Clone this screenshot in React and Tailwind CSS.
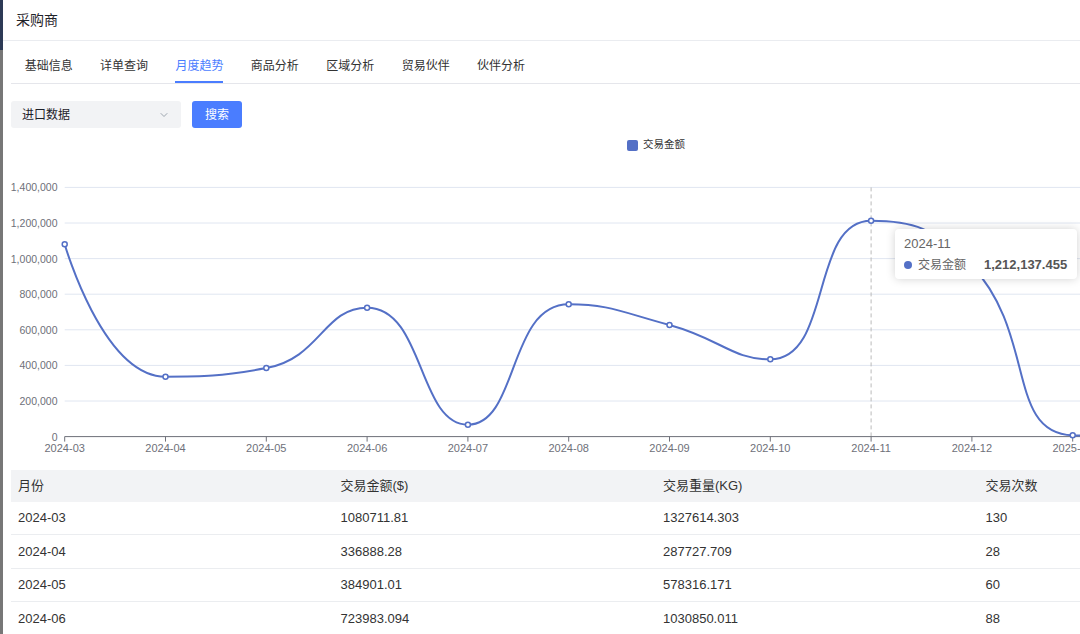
import React from "react";
import { ChevronDown } from "lucide-react";

const FONT = { fontFamily: '"Liberation Sans","Noto Sans CJK SC",sans-serif' };

const months = ["2024-03","2024-04","2024-05","2024-06","2024-07","2024-08","2024-09","2024-10","2024-11","2024-12","2025-01","2025-02"];
const values = [1080711.81, 336888.28, 384901.01, 723983.094, 66900, 743000, 627000, 434000, 1212137.455, 960000, 7000, 0];

const X0 = 53.7;
const DX = 100.8;
const Y0 = 281.6;
const PER = 35.6 / 200000;
const xAt = (i) => X0 + i * DX;
const yAt = (v) => Y0 - v * PER;

function smoothPath(pts, smooth = 0.5) {
  let d = `M${pts[0][0]},${pts[0][1]}`;
  let cp0x = pts[0][0], cp0y = pts[0][1];
  for (let k = 1; k < pts.length; k++) {
    const [x, y] = pts[k];
    const [px, py] = pts[k - 1];
    let ncx = x, ncy = y, c1x = x, c1y = y;
    if (k < pts.length - 1) {
      const [nx, ny] = pts[k + 1];
      let vx = nx - px, vy = ny - py;
      const lp = Math.hypot(x - px, y - py);
      const ln = Math.hypot(nx - x, ny - y);
      const r = ln / (ln + lp);
      c1x = x + vx * smooth * r;
      c1y = y + vy * smooth * r;
      c1x = Math.min(c1x, Math.max(nx, x));
      c1y = Math.min(c1y, Math.max(ny, y));
      c1x = Math.max(c1x, Math.min(nx, x));
      c1y = Math.max(c1y, Math.min(ny, y));
      vx = c1x - x; vy = c1y - y;
      ncx = x - vx * lp / ln;
      ncy = y - vy * lp / ln;
      ncx = Math.min(ncx, Math.max(px, x));
      ncy = Math.min(ncy, Math.max(py, y));
      ncx = Math.max(ncx, Math.min(px, x));
      ncy = Math.max(ncy, Math.min(py, y));
      vx = x - ncx; vy = y - ncy;
      c1x = x + vx * ln / lp;
      c1y = y + vy * ln / lp;
    }
    d += ` C${cp0x},${cp0y} ${ncx},${ncy} ${x},${y}`;
    cp0x = c1x; cp0y = c1y;
  }
  return d;
}

const pts = values.map((v, i) => [xAt(i), yAt(v)]);
const yLabels = ["0","200,000","400,000","600,000","800,000","1,000,000","1,200,000","1,400,000"];

const tabs = ["基础信息","详单查询","月度趋势","商品分析","区域分析","贸易伙伴","伙伴分析"];

const rows = [
  ["2024-03","1080711.81","1327614.303","130"],
  ["2024-04","336888.28","287727.709","28"],
  ["2024-05","384901.01","578316.171","60"],
  ["2024-06","723983.094","1030850.011","88"],
];

function Chart() {
  return (
    <div className="relative w-[1290px] h-[306px]">
      <svg width="1290" height="306" className="block overflow-visible">
        {yLabels.map((l, k) => (
          <g key={l}>
            {k > 0 && (
              <line x1={X0} x2={1161} y1={Y0 - k * 35.6} y2={Y0 - k * 35.6} stroke="#e0e6f1" strokeWidth="1" />
            )}
            <text x={46.5} y={Y0 - k * 35.6} textAnchor="end" dominantBaseline="central" fontSize="10.5" fill="#6e7079" style={FONT}>
              {l}
            </text>
          </g>
        ))}
        <line x1={xAt(8)} x2={xAt(8)} y1={Y0 - 7 * 35.6} y2={Y0} stroke="#bbbbbb" strokeWidth="1" strokeDasharray="4 3" />
        <line x1={X0} x2={1161} y1={Y0} y2={Y0} stroke="#6e7079" strokeWidth="1" />
        {months.map((m, i) => (
          <g key={m}>
            <line x1={xAt(i)} x2={xAt(i)} y1={Y0} y2={Y0 + 5} stroke="#6e7079" strokeWidth="1" />
            <text x={xAt(i)} y={293} textAnchor="middle" dominantBaseline="central" fontSize="11" fill="#6e7079" style={FONT}>
              {m}
            </text>
          </g>
        ))}
        <path d={smoothPath(pts)} fill="none" stroke="#5470c6" strokeWidth="2" />
        {pts.map(([x, y], i) => (
          i === 9 ? null :
          <circle key={i} cx={x} cy={y} r="2.5" fill="#ffffff" stroke="#5470c6" strokeWidth="1.5" />
        ))}
      </svg>
      <div className="absolute left-[884px] top-[74px] w-[182px] h-[50px] bg-white rounded-[4px] shadow-[0_0_10px_rgba(0,0,0,0.18)] pl-[9px] pt-[7px] flex flex-col gap-[5px]" style={FONT}>
        <div className="text-[13px] leading-[16px] text-[#666666]">2024-11</div>
        <div className="flex items-center leading-[16px]">
          <span className="w-[8px] h-[8px] rounded-full bg-[#5470c6] mr-[6px]" />
          <span className="text-[12px] text-[#666666]">交易金额</span>
          <span className="ml-[18px] text-[13px] font-bold text-[#555555]">1,212,137.455</span>
        </div>
      </div>
    </div>
  );
}

export default function App() {
  return (
    <div className="w-[1080px] h-[634px] overflow-hidden flex bg-white" style={FONT}>
      <div className="w-[3px] shrink-0 flex flex-col">
        <div className="h-[50px] bg-[#2d3a56]" />
        <div className="flex-1 bg-[#777777]" />
      </div>
      <div className="flex-1 min-w-0 overflow-hidden flex flex-col">
        <div className="h-[41px] shrink-0 border-b border-[#eaecf0] pl-[13px] flex items-center text-[14px] text-[#1f2329]">
          采购商
        </div>
        <div className="ml-[8px] w-[1290px] flex flex-col">
          <div className="flex border-b border-[#e5e6eb]">
            {tabs.map((t) => {
              const active = t === "月度趋势";
              return (
                <div key={t} className="h-[42px] px-[13.7px] flex">
                  <span
                    className={
                      "h-full flex items-center pt-[10px] border-b-2 text-[12px] " +
                      (active ? "border-[#4a7dff] text-[#4a7dff]" : "border-transparent text-[#333333]")
                    }
                  >
                    {t}
                  </span>
                </div>
              );
            })}
          </div>
          <div className="mt-[17px] flex items-center gap-[11px]">
            <div className="w-[170px] h-[27px] rounded-[3px] bg-[#f2f3f5] pl-[11px] pr-[11px] flex items-center justify-between">
              <span className="text-[12px] text-[#1d2129]">进口数据</span>
              <ChevronDown size={12} strokeWidth={1.6} color="#86909c" />
            </div>
            <button className="w-[50px] h-[27px] rounded-[3px] bg-[#4a7dff] text-white text-[12px] flex items-center justify-center">
              搜索
            </button>
          </div>
          <div className="h-[27px] pt-[7px] flex items-center justify-center gap-[5px]">
            <span className="w-[11px] h-[11px] rounded-[2px] bg-[#5470c6]" />
            <span className="text-[10.5px] text-[#333333]">交易金额</span>
          </div>
          <Chart />
          <div className="mt-[9px] flex flex-col text-[13px] text-[#333333]">
            <div className="h-[32px] bg-[#f2f3f5] flex items-center">
              {["月份","交易金额($)","交易重量(KG)","交易次数"].map((h) => (
                <div key={h} className="w-[322.5px] pl-[7px]">{h}</div>
              ))}
            </div>
            {rows.map((r) => (
              <div key={r[0]} className="h-[33.4px] border-b border-[#ebedf0] flex items-center">
                {r.map((c, i) => (
                  <div key={i} className="w-[322.5px] pl-[7px]">{c}</div>
                ))}
              </div>
            ))}
          </div>
        </div>
      </div>
    </div>
  );
}
